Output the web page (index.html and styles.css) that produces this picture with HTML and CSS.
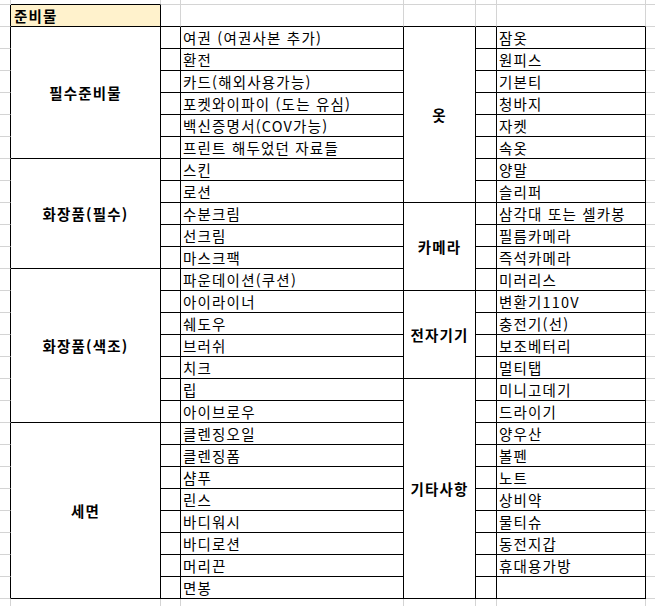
FILE: index.html
```html
<!DOCTYPE html>
<html lang="ko">
<head>
<meta charset="utf-8">
<title>준비물</title>
<link rel="stylesheet" href="styles.css">
</head>
<body>
<div class="sheet">
  <!-- top partial row -->
  <div class="cell c0"></div><div class="cell c1 kb"></div><div class="cell c2"></div><div class="cell c3"></div><div class="cell c4"></div><div class="cell c5"></div><div class="cell c6"></div><div class="cell c7"></div>
  <!-- header row -->
  <div class="cell c0 kr"></div><div class="cell c1 k head">준비물</div><div class="cell c2 kb"></div><div class="cell c3 kb"></div><div class="cell c4 kb"></div><div class="cell c5 kb"></div><div class="cell c6 kb"></div><div class="cell c7"></div>

  <!-- 1 -->
  <div class="cell c0 kr"></div><div class="cell c1 k grp span6">필수준비물</div><div class="cell c2 k"></div><div class="cell c3 k txt">여권 (여권사본 추가)</div><div class="cell c4 k grp span8">옷</div><div class="cell c5 k"></div><div class="cell c6 k txt">잠옷</div><div class="cell c7"></div>
  <!-- 2 -->
  <div class="cell c0 kr"></div><div class="cell c2 k"></div><div class="cell c3 k txt">환전</div><div class="cell c5 k"></div><div class="cell c6 k txt">원피스</div><div class="cell c7"></div>
  <!-- 3 -->
  <div class="cell c0 kr"></div><div class="cell c2 k"></div><div class="cell c3 k txt">카드(해외사용가능)</div><div class="cell c5 k"></div><div class="cell c6 k txt">기본티</div><div class="cell c7"></div>
  <!-- 4 -->
  <div class="cell c0 kr"></div><div class="cell c2 k"></div><div class="cell c3 k txt">포켓와이파이 (도는 유심)</div><div class="cell c5 k"></div><div class="cell c6 k txt">청바지</div><div class="cell c7"></div>
  <!-- 5 -->
  <div class="cell c0 kr"></div><div class="cell c2 k"></div><div class="cell c3 k txt">백신증명서(COV가능)</div><div class="cell c5 k"></div><div class="cell c6 k txt">자켓</div><div class="cell c7"></div>
  <!-- 6 -->
  <div class="cell c0 kr"></div><div class="cell c2 k"></div><div class="cell c3 k txt">프린트 해두었던 자료들</div><div class="cell c5 k"></div><div class="cell c6 k txt">속옷</div><div class="cell c7"></div>
  <!-- 7 -->
  <div class="cell c0 kr"></div><div class="cell c1 k grp span5">화장품(필수)</div><div class="cell c2 k"></div><div class="cell c3 k txt">스킨</div><div class="cell c5 k"></div><div class="cell c6 k txt">양말</div><div class="cell c7"></div>
  <!-- 8 -->
  <div class="cell c0 kr"></div><div class="cell c2 k"></div><div class="cell c3 k txt">로션</div><div class="cell c5 k"></div><div class="cell c6 k txt">슬리퍼</div><div class="cell c7"></div>
  <!-- 9 -->
  <div class="cell c0 kr"></div><div class="cell c2 k"></div><div class="cell c3 k txt">수분크림</div><div class="cell c4 k grp span4">카메라</div><div class="cell c5 k"></div><div class="cell c6 k txt">삼각대 또는 셀카봉</div><div class="cell c7"></div>
  <!-- 10 -->
  <div class="cell c0 kr"></div><div class="cell c2 k"></div><div class="cell c3 k txt">선크림</div><div class="cell c5 k"></div><div class="cell c6 k txt">필름카메라</div><div class="cell c7"></div>
  <!-- 11 -->
  <div class="cell c0 kr"></div><div class="cell c2 k"></div><div class="cell c3 k txt">마스크팩</div><div class="cell c5 k"></div><div class="cell c6 k txt">즉석카메라</div><div class="cell c7"></div>
  <!-- 12 -->
  <div class="cell c0 kr"></div><div class="cell c1 k grp span7">화장품(색조)</div><div class="cell c2 k"></div><div class="cell c3 k txt">파운데이션(쿠션)</div><div class="cell c5 k"></div><div class="cell c6 k txt">미러리스</div><div class="cell c7"></div>
  <!-- 13 -->
  <div class="cell c0 kr"></div><div class="cell c2 k"></div><div class="cell c3 k txt">아이라이너</div><div class="cell c4 k grp span4">전자기기</div><div class="cell c5 k"></div><div class="cell c6 k txt">변환기110V</div><div class="cell c7"></div>
  <!-- 14 -->
  <div class="cell c0 kr"></div><div class="cell c2 k"></div><div class="cell c3 k txt">쉐도우</div><div class="cell c5 k"></div><div class="cell c6 k txt">충전기(선)</div><div class="cell c7"></div>
  <!-- 15 -->
  <div class="cell c0 kr"></div><div class="cell c2 k"></div><div class="cell c3 k txt">브러쉬</div><div class="cell c5 k"></div><div class="cell c6 k txt">보조베터리</div><div class="cell c7"></div>
  <!-- 16 -->
  <div class="cell c0 kr"></div><div class="cell c2 k"></div><div class="cell c3 k txt">치크</div><div class="cell c5 k"></div><div class="cell c6 k txt">멀티탭</div><div class="cell c7"></div>
  <!-- 17 -->
  <div class="cell c0 kr"></div><div class="cell c2 k"></div><div class="cell c3 k txt">립</div><div class="cell c4 k grp span10">기타사항</div><div class="cell c5 k"></div><div class="cell c6 k txt">미니고데기</div><div class="cell c7"></div>
  <!-- 18 -->
  <div class="cell c0 kr"></div><div class="cell c2 k"></div><div class="cell c3 k txt">아이브로우</div><div class="cell c5 k"></div><div class="cell c6 k txt">드라이기</div><div class="cell c7"></div>
  <!-- 19 -->
  <div class="cell c0 kr"></div><div class="cell c1 k grp span8">세면</div><div class="cell c2 k"></div><div class="cell c3 k txt">클렌징오일</div><div class="cell c5 k"></div><div class="cell c6 k txt">양우산</div><div class="cell c7"></div>
  <!-- 20 -->
  <div class="cell c0 kr"></div><div class="cell c2 k"></div><div class="cell c3 k txt">클렌징폼</div><div class="cell c5 k"></div><div class="cell c6 k txt">볼펜</div><div class="cell c7"></div>
  <!-- 21 -->
  <div class="cell c0 kr"></div><div class="cell c2 k"></div><div class="cell c3 k txt">샴푸</div><div class="cell c5 k"></div><div class="cell c6 k txt">노트</div><div class="cell c7"></div>
  <!-- 22 -->
  <div class="cell c0 kr"></div><div class="cell c2 k"></div><div class="cell c3 k txt">린스</div><div class="cell c5 k"></div><div class="cell c6 k txt">상비약</div><div class="cell c7"></div>
  <!-- 23 -->
  <div class="cell c0 kr"></div><div class="cell c2 k"></div><div class="cell c3 k txt">바디워시</div><div class="cell c5 k"></div><div class="cell c6 k txt">물티슈</div><div class="cell c7"></div>
  <!-- 24 -->
  <div class="cell c0 kr"></div><div class="cell c2 k"></div><div class="cell c3 k txt">바디로션</div><div class="cell c5 k"></div><div class="cell c6 k txt">동전지갑</div><div class="cell c7"></div>
  <!-- 25 -->
  <div class="cell c0 kr"></div><div class="cell c2 k"></div><div class="cell c3 k txt">머리끈</div><div class="cell c5 k"></div><div class="cell c6 k txt">휴대용가방</div><div class="cell c7"></div>
  <!-- 26 -->
  <div class="cell c0 kr"></div><div class="cell c2 k"></div><div class="cell c3 k txt">면봉</div><div class="cell c5 k"></div><div class="cell c6 k txt"></div><div class="cell c7"></div>

  <!-- bottom partial row -->
  <div class="cell c0"></div><div class="cell c1"></div><div class="cell c2"></div><div class="cell c3"></div><div class="cell c4"></div><div class="cell c5"></div><div class="cell c6"></div><div class="cell c7"></div>
</div>
</body>
</html>
```

FILE: styles.css
```css
html, body {
  margin: 0;
  padding: 0;
  background: #ffffff;
}

body {
  width: 655px;
  height: 606px;
  overflow: hidden;
  font-family: "Noto Sans CJK KR", "Noto Sans", sans-serif;
  font-size: 14.5px;
  letter-spacing: 1.2px;
  color: #000000;
}

.sheet {
  display: grid;
  grid-template-columns: 11px 150px 20px 223px 72px 21px 149px 20px;
  grid-template-rows: 5px repeat(27, 22px) 20px;
  width: 666px;
}

.cell {
  box-sizing: border-box;
  border-right: 1px solid #d4d4d4;
  border-bottom: 1px solid #d4d4d4;
  min-width: 0;
  min-height: 0;
  overflow: hidden;
  white-space: nowrap;
}

.c0 { grid-column: 1; }
.c1 { grid-column: 2; }
.c2 { grid-column: 3; }
.c3 { grid-column: 4; }
.c4 { grid-column: 5; }
.c5 { grid-column: 6; }
.c6 { grid-column: 7; }
.c7 { grid-column: 8; }

.k {
  border-right-color: #000000;
  border-bottom-color: #000000;
}
.kr { border-right-color: #000000; }
.kb { border-bottom-color: #000000; }

.head {
  background: #fff2cc;
  font-weight: 700;
  display: flex;
  align-items: center;
  padding-left: 3px;
  line-height: 20px;
}

.txt {
  display: flex;
  align-items: center;
  padding-left: 2px;
  line-height: 20px;
}

.grp {
  display: flex;
  align-items: center;
  justify-content: center;
  font-weight: 700;
  line-height: 20px;
}

.span4 { grid-row: span 4; }
.span5 { grid-row: span 5; }
.span6 { grid-row: span 6; }
.span7 { grid-row: span 7; }
.span8 { grid-row: span 8; }
.span10 { grid-row: span 10; }
```
